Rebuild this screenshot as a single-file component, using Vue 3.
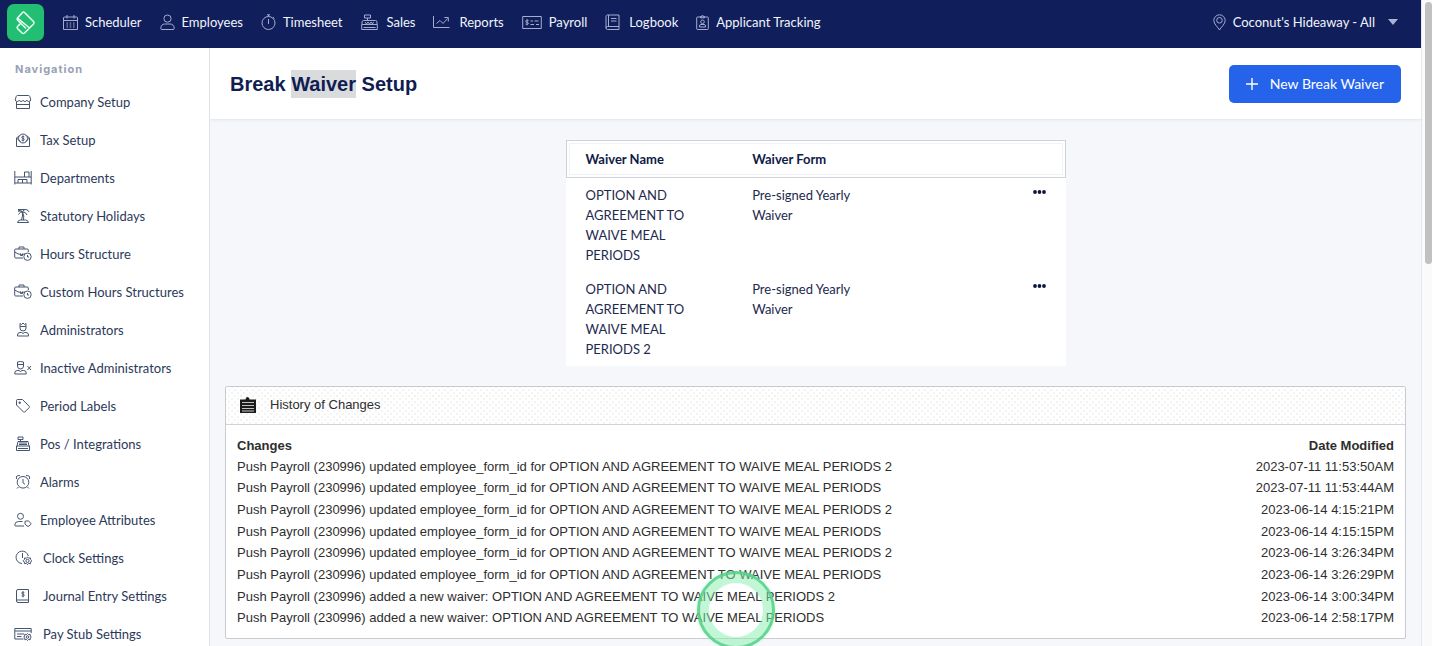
<script setup>
const topNav = [
  { label: 'Scheduler', icon: 'calendar', width: 15 },
  { label: 'Employees', icon: 'person', width: 15 },
  { label: 'Timesheet', icon: 'stopwatch', width: 15 },
  { label: 'Sales', icon: 'register', width: 19 },
  { label: 'Reports', icon: 'chart', width: 19 },
  { label: 'Payroll', icon: 'cheque', width: 20 },
  { label: 'Logbook', icon: 'book', width: 17 },
  { label: 'Applicant Tracking', icon: 'badge', width: 13 },
]

const sideNav = [
  { label: 'Company Setup', icon: 'store' },
  { label: 'Tax Setup', icon: 'tax' },
  { label: 'Departments', icon: 'desk' },
  { label: 'Statutory Holidays', icon: 'palm' },
  { label: 'Hours Structure', icon: 'briefcase' },
  { label: 'Custom Hours Structures', icon: 'briefcase' },
  { label: 'Administrators', icon: 'admin' },
  { label: 'Inactive Administrators', icon: 'adminOff' },
  { label: 'Period Labels', icon: 'tag' },
  { label: 'Pos / Integrations', icon: 'pos' },
  { label: 'Alarms', icon: 'alarm' },
  { label: 'Employee Attributes', icon: 'attributes' },
  { label: 'Clock Settings', icon: 'clockGear', wide: true },
  { label: 'Journal Entry Settings', icon: 'journal', wide: true },
  { label: 'Pay Stub Settings', icon: 'stub', wide: true },
]

const icons = {
  calendar: 'M1.5 3h12a1 1 0 0 1 1 1v11.500h-14V4a1 1 0 0 1 1-1zM.5 6.500h14M4 1v3.500M11 1v3.500M3.500 9h1.500M6.700 9h1.500M10 9h1.500M3.500 11h1.500M6.700 11h1.500M10 11h1.500M3.500 13h1.500M6.700 13h1.500M10 13h1.500',
  person: 'M7.500 1a3.500 3.500 0 1 1 0 7.200a3.500 3.500 0 0 1 0-7.200zM.8 14.500c0-3 1.700-4.500 4-4.500h5.400c2.300 0 4 1.500 4 4.500q0 1-1 1H1.800q-1 0-1-1z',
  stopwatch: 'M7.500 2.500a6.500 6.500 0 1 1 0 13a6.500 6.500 0 0 1 0-13zM7.500 5v5M6 .8h3M7.500 .8v1.700M12 3.200l1.400 1.300',
  register: 'M3.500 1h6v3h-6zM6.500 4v2M1 10.500V8q0-1.500 1.500-1.500h12q1.500 0 1.500 1.500v2.500M.7 10.500h15.600v5H.7zM4 8l1.500 2l1.500-2l1.500 2l1.500-2l1.500 2l1-2M2.500 13.500h12',
  chart: 'M.5 2v11.500h16M3.500 9.500l3.500-3l3 3l4.500-5M11.300 3.500h4v4',
  cheque: 'M.7 2.500h18.600v12H.7zM6.500 6.500c-2-.8-2.800 0-2.800.8c0 1.500 2.800.6 2.800 2c0 1-1.500 1.400-3 .7M5.100 5.300v6M8.500 7h2.500M12.500 7h4M8.500 10.500h3.500M14 10.500h3',
  book: 'M3 1h11v14.500H2.500a1.500 1.500 0 0 1 0-3H14M1 14V2.500A1.500 1.500 0 0 1 3 1M3.500 1v11.500M6 4.500h5.500M6 7h5.500',
  badge: 'M1.500 3h10q.8 0 .8.800v11q0 .7-.8.700h-10q-.8 0-.8-.7v-11q0-.8.8-.8zM4.500 3.800V2.500h1a1 1 0 0 1 2 0h1v1.300zM6.500 6a1.800 1.800 0 1 1 0 3.600a1.800 1.800 0 0 1 0-3.600zM3.500 13v-1q0-1.500 1.500-1.500h3q1.500 0 1.500 1.500v1z',
  store: 'M3.500 2.500h11q1 0 1.300 1l1 3.500q-.5 1.500-2 1.500t-2-1.300q-.5 1.300-1.900 1.300t-1.900-1.300q-.5 1.300-1.900 1.300t-1.900-1.300q-.5 1.300-2 1.300t-2-1.500l1-3.500q.3-1 1.300-1zM2.500 9v6.500h13V9M2.500 11.500h13',
  tax: 'M2.500 7v8.500h13V7L12.500 4.500M5.500 4.500L2.500 7l4 3.500M15.500 7l-4 3.500M4.500 7.500a4.500 4.500 0 1 1 9 0a4.500 4.500 0 0 1-9 0zM10.300 5.800c-1.500-.8-2.600-.2-2.600.5c0 1.300 2.600.8 2.600 2.200c0 .8-1.300 1.300-2.700.6M9 4.500v6',
  desk: 'M.8 2v13.500M17.200 2v13.500M.8 8h16.400M.8 14h16.400M10.500 8V3h4.500v5M4 14V10.500h9v3.500M8.500 10.500v3.500',
  palm: 'M3.500 15.500q.5-2.500 3-2.500h5q2.500 0 3 2.500zM7.500 13q1.500-4 1-8M9.500 13q1-4-1-8M8.500 5q-1.500-3-4.500-1M4 4q2-.5 4.500 1Q6 4.500 4.500 7.500M8.500 5q1-3 3.500-2.500q2.500.5 3 2.500M8.500 5q3-.5 4.500 3M4 2.500h7',
  briefcase: 'M9 13H1.700q-1 0-1-1V5q0-1 1-1h11.600q1 0 1 1v2M5 4V2h5v2M.8 7q3 2.500 6.700 2.500q2 0 3-.8M6.500 8.500v2h2v-2M13.500 8a3.700 3.700 0 1 1 0 7.400a3.700 3.700 0 0 1 0-7.400zM13.500 10v2h1.500',
  admin: 'M6 2.500v4.500q0 3 3 3t3-3V2.500L10.500 3.500L9 2L7.500 3.500zM6 5.500h6M3.500 15v-1q0-2.500 2.500-2.500h1.500l1.500 1l1.500-1H12q2.500 0 2.500 2.500v1z',
  adminOff: 'M3.500 3v4q0 3 3 3t3-3V3q-3-1-6 0zM3.500 5.500h6M.8 15v-1q0-2.500 2.500-2.500H5l1.500 1l1.500-1h1.700q2.500 0 2.500 2.500v1zM13.500 7l3.500 4M17 7l-3.500 4',
  tag: 'M2.500 3.500v4.500l7 7q.7.500 1.300 0l4.400-4.400q.6-.6 0-1.300L8.500 2.500H3.500q-1 0-1 1zM5 5h1.300v1.300H5z',
  pos: 'M4 2h5v2.500H4zM6.500 4.500v2M3 11l1-4.500h10l1 4.500M2.500 11h13v4.500h-13zM5 8h8M5 9.500h8M4 13.500h10',
  alarm: 'M9 3.500a5.800 5.800 0 1 1 0 11.600a5.800 5.800 0 0 1 0-11.600zM9 6v3.800l2 1.500M2.500 6Q2 3.500 3 3t3-.5M15.500 6q.5-2.500-.5-3t-3-.5M4.500 14l-1.500 1.500M13.500 14l1.500 1.500',
  attributes: 'M6.500 2.300a3 3 0 1 1 0 6a3 3 0 0 1 0-6zM10 15H1.700q-1 0-1-1q.3-3.500 3.800-3.500h4M11 10.500v2.500l2 2q1 .8 2 0l1.700-1.500q.6-.7 0-1.500l-2.200-2h-2.500q-1 0-1 .500z',
  clockGear: 'M8 14.500A6.200 6.200 0 1 1 14.300 7M8.500 4v5M13.500 8l1.200 1.200l1.700-.3l.3 1.700l1.200 1.200l-1.200 1.200l-.3 1.700l-1.700-.3l-1.200 1.200l-1.200-1.200l-1.700.3l-.3-1.700l-1.200-1.200l1.200-1.200l.3-1.700l1.700.3zM13.500 10.300a1.600 1.600 0 1 1 0 3.200a1.600 1.600 0 0 1 0-3.200z',
  journal: 'M4 2.500h10.500v13H4q-1.500 0-1.500-1.500V4q0-1.500 1.500-1.500zM2.800 13h11.700M10.300 5.500c-1.500-.8-2.600-.2-2.600.5c0 1.300 2.600.8 2.600 2.200c0 .8-1.300 1.300-2.700.6M9 4.300v6',
  stub: 'M9.500 14H.8V3.500h16.400V8M.8 6h16.400M3 9h7M3 11.500h4.500M13.500 8.500l1 1l1.700-.2l.1 1.700l1 1l-1 1l-.1 1.700l-1.700-.2l-1 1l-1-1l-1.700.2l-.1-1.700l-1-1l1-1l.1-1.700l1.700.2zM13.500 10.700a1.300 1.300 0 1 1 0 2.600a1.300 1.300 0 0 1 0-2.600z',
}

const waivers = [
  { name: 'OPTION AND AGREEMENT TO WAIVE MEAL PERIODS', form: 'Pre-signed Yearly Waiver' },
  { name: 'OPTION AND AGREEMENT TO WAIVE MEAL PERIODS 2', form: 'Pre-signed Yearly Waiver' },
]

const updated = 'Push Payroll (230996) updated employee_form_id for OPTION AND AGREEMENT TO WAIVE MEAL PERIODS'
const added = 'Push Payroll (230996) added a new waiver: OPTION AND AGREEMENT TO WAIVE MEAL PERIODS'
const changes = [
  { text: updated + ' 2', date: '2023-07-11 11:53:50AM' },
  { text: updated, date: '2023-07-11 11:53:44AM' },
  { text: updated + ' 2', date: '2023-06-14 4:15:21PM' },
  { text: updated, date: '2023-06-14 4:15:15PM' },
  { text: updated + ' 2', date: '2023-06-14 3:26:34PM' },
  { text: updated, date: '2023-06-14 3:26:29PM' },
  { text: added + ' 2', date: '2023-06-14 3:00:34PM' },
  { text: added, date: '2023-06-14 2:58:17PM' },
]
</script>

<template>
  <div class="window">
    <div class="page">
      <header class="topbar">
        <a class="logo" href="#" aria-label="Home">
          <svg width="37" height="37" viewBox="0 0 37 37" fill="none" stroke="#e9fff3" stroke-width="1.500" stroke-linejoin="round" stroke-linecap="round">
            <path d="M15.500 8.500q1-1 2 0l9 9q1 1.300 0 2.500l-4 4L10.500 14zM10.500 14q-1 1 0 2l8 8M14 19l-3.500 3.500q-1 1 0 2l4.500 4.500q1.300 1 2.500 0l5-5" />
          </svg>
        </a>
        <nav class="menu" aria-label="Main">
          <a v-for="item in topNav" :key="item.label" href="#">
            <svg class="icon" :width="item.width" height="17" :viewBox="`0 0 ${item.width} 17`"><path :d="icons[item.icon]" /></svg>
            <span>{{ item.label }}</span>
          </a>
        </nav>
        <button class="location" type="button">
          <svg class="icon" width="13" height="17" viewBox="0 0 13 17">
            <path d="M6.500 .8a5.700 5.700 0 0 1 5.700 5.700c0 3.500-4 6.500-5.700 9.500c-1.700-3-5.700-6-5.700-9.500A5.700 5.700 0 0 1 6.500 .8zM6.500 3.500a2.800 2.800 0 1 1 0 5.600a2.800 2.800 0 0 1 0-5.600z" />
          </svg>
          <span>Coconut's Hideaway - All</span>
          <svg class="caret" width="10" height="6" viewBox="0 0 10 6"><path d="M0 0h10L5 6z" /></svg>
        </button>
      </header>

      <div class="body">
        <aside class="sidebar">
          <h2>Navigation</h2>
          <nav aria-label="Settings">
            <a v-for="item in sideNav" :key="item.label" href="#" :class="{ wide: item.wide }">
              <svg class="icon" width="18" height="18" viewBox="0 0 18 18"><path :d="icons[item.icon]" /></svg>
              <span>{{ item.label }}</span>
            </a>
          </nav>
        </aside>

        <main>
          <div class="heading">
            <h1>Break <mark>Waiver</mark> Setup</h1>
            <button class="primary" type="button">
              <svg width="12" height="12" viewBox="0 0 12 12"><path d="M6 0v12M0 6h12" stroke="#fff" stroke-width="1.400" /></svg>
              <span>New Break Waiver</span>
            </button>
          </div>

          <div class="content">
            <table class="waivers">
              <thead>
                <tr><th scope="col">Waiver Name</th><th scope="col">Waiver Form</th><td></td></tr>
              </thead>
              <tbody>
                <tr v-for="w in waivers" :key="w.name">
                  <td>{{ w.name }}</td>
                  <td>{{ w.form }}</td>
                  <td class="actions">
                    <button type="button" aria-label="Actions">
                      <svg width="13" height="4" viewBox="0 0 13 4" fill="#0b1742"><circle cx="2" cy="2" r="1.900" /><circle cx="6.500" cy="2" r="1.900" /><circle cx="11" cy="2" r="1.900" /></svg>
                    </button>
                  </td>
                </tr>
              </tbody>
            </table>

            <section class="history">
              <h2>
                <svg width="16" height="16" viewBox="0 0 16 16">
                  <path d="M0 2.500h5.500a2 2.500 0 0 1 4 0H16V16H0z" fill="#1c1c1c" />
                  <path d="M2 5.500h12M2 8.500h12M2 11.500h12M2 14h12" stroke="#c4c4c4" />
                </svg>
                <span>History of Changes</span>
              </h2>
              <div class="history-body">
                <table>
                  <thead>
                    <tr><th scope="col">Changes</th><th scope="col">Date Modified</th></tr>
                  </thead>
                  <tbody>
                    <tr v-for="c in changes" :key="c.date"><td>{{ c.text }}</td><td>{{ c.date }}</td></tr>
                  </tbody>
                </table>
              </div>
            </section>
          </div>
          <div class="pointer" aria-hidden="true"></div>
        </main>
      </div>
    </div>
    <div class="scrollbar" aria-hidden="true"><div class="thumb"></div></div>
  </div>
</template>

<style>
body {
  background: #f6f7fb;
}
</style>

<style scoped>
.window {
  display: grid;
  grid-template-columns: 1fr 11px;
  height: 100vh;
  overflow: hidden;
  font-family: Lato, "Liberation Sans", sans-serif;
  font-size: 13px;
  line-height: 20px;
  color: #1d294d;
}
.page {
  display: flex;
  flex-direction: column;
  min-width: 0;
  min-height: 0;
}
a {
  color: inherit;
  text-decoration: none;
}
button {
  border: 0;
  padding: 0;
  background: none;
  font: inherit;
  color: inherit;
  cursor: pointer;
}
.icon {
  flex: none;
  fill: none;
  stroke: currentColor;
  stroke-width: 1;
  stroke-linejoin: round;
}
.topbar {
  display: flex;
  align-items: center;
  flex: none;
  height: 48px;
  box-sizing: border-box;
  padding: 0 23px 4px 7px;
  background: #101f5b;
  color: #f2f4fb;
}
.logo {
  display: block;
  height: 37px;
  border-radius: 7px;
  background: #22bf73;
  box-shadow: 0 1px 2px #06331f;
}
.menu {
  display: flex;
  align-items: center;
  gap: 18px;
  margin-left: 19px;
}
.menu a,
.location {
  display: flex;
  align-items: center;
  gap: 7px;
  white-space: nowrap;
}
.topbar .menu .icon,
.location .icon {
  color: #a3add0;
}
.location {
  margin-left: auto;
}
.caret {
  margin-left: 6px;
  fill: #aab3d3;
}
.body {
  display: flex;
  flex: 1;
  min-height: 0;
}
.sidebar {
  flex: none;
  width: 210px;
  box-sizing: border-box;
  border-right: 1px solid #dfe2e8;
  background: #fff;
  overflow: hidden;
}
.sidebar h2 {
  margin: 0;
  padding: 14px 15px 7px;
  font: bold 11px/14px Inter, sans-serif;
  letter-spacing: 1px;
  color: #98a1b5;
}
.sidebar a {
  display: flex;
  align-items: center;
  gap: 8px;
  height: 38px;
  padding-left: 14px;
  color: #2c3959;
}
.sidebar a.wide {
  gap: 11px;
}
.sidebar .icon {
  color: #46556f;
}
main {
  position: relative;
  flex: 1;
  min-width: 0;
  overflow: hidden;
  background: #f6f7fb;
}
.heading {
  display: flex;
  align-items: center;
  justify-content: space-between;
  height: 71px;
  padding: 0 20px;
  border-bottom: 1px solid #e8eaef;
  background: #fff;
  box-shadow: 0 1px 2px #eceef3;
}
h1 {
  margin: 0;
  font: bold 20px/28px "Liberation Sans", Arial, sans-serif;
  color: #101d52;
}
mark {
  display: inline-block;
  background: #dadbdd;
  color: inherit;
}
.primary {
  display: flex;
  align-items: center;
  gap: 12px;
  height: 38px;
  padding: 0 17px;
  border-radius: 5px;
  background: #2563eb;
  font-size: 14px;
  color: #fff;
}
.content {
  display: flex;
  flex-direction: column;
  gap: 20px;
  padding: 20px 15px;
}
.waivers {
  width: 500px;
  align-self: center;
  border-spacing: 0;
  table-layout: fixed;
  background: #fff;
}
.waivers th,
.waivers td {
  padding: 7px 20px;
  text-align: left;
  vertical-align: top;
}
.waivers thead tr {
  outline: 1px solid #cfd3d9;
  outline-offset: -1px;
  box-shadow: inset 0 0 0 3px #fff, inset 0 0 0 4px #f0f2f6;
}
.waivers thead th,
.waivers thead td {
  padding: 9px 20px;
  color: #0f1b47;
}
.waivers .actions {
  text-align: right;
}
.actions button {
  display: inline-flex;
  padding: 5px 0;
  vertical-align: top;
}
.history {
  border: 1px solid #c9cccf;
  border-radius: 2px;
  background: #fff;
  font-family: "Liberation Sans", Arial, sans-serif;
  color: #2e2e2e;
}
.history h2 {
  display: flex;
  align-items: center;
  gap: 14px;
  margin: 0;
  padding: 8px 14px 9px;
  border-bottom: 1px solid #d0d3d5;
  background-image: radial-gradient(circle, #f3f3f3 1px, transparent 1px), radial-gradient(circle, #f3f3f3 1px, transparent 1px);
  background-size: 6px 6px;
  background-position: 0 0, 3px 3px;
  font-size: 13px;
  font-weight: normal;
}
.history-body {
  padding: 11px 11px 9px;
}
.history table {
  width: 100%;
  height: 193px;
  border-spacing: 0;
  font-size: 13px;
}
.history th,
.history td {
  padding: 0;
  text-align: left;
}
.history th:last-child,
.history td:last-child {
  text-align: right;
}
.pointer {
  position: absolute;
  top: 526px;
  left: 490px;
  width: 54px;
  height: 54px;
  border: 9px solid rgba(134, 239, 172, 0.5);
  border-radius: 50%;
  outline: 3px solid rgba(82, 208, 136, 0.85);
  box-shadow: 0 0 3px 3px rgba(134, 239, 172, 0.5);
}
.scrollbar {
  padding: 2px 0 0 3px;
  border-left: 1px solid #e6e7ea;
  background: #fafafa;
}
.thumb {
  height: 262px;
  border-radius: 4px;
  background: #c1c1c1;
}
</style>
